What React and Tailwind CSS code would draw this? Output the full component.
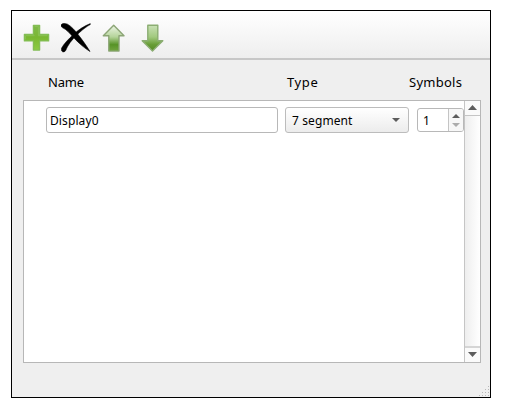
import React from "react";

function PlusIcon() {
  return (
    <svg width="28" height="28" viewBox="0 0 28 28" className="block">
      <defs>
        <linearGradient id="plus" x1="0" y1="0" x2="0" y2="1">
          <stop offset="0" stopColor="#7fb84a" />
          <stop offset="0.5" stopColor="#7ab832" />
          <stop offset="1" stopColor="#8dcb45" />
        </linearGradient>
      </defs>
      <path d="M10.4 1.3h6.2v9.2h9v6.4h-9v9.2h-6.2v-9.2h-9v-6.4h9z" fill="url(#plus)" stroke="#83bd55" strokeWidth="1.3" strokeLinejoin="round" />
      <path d="M11.6 2.6h3.8v9.1h9M2.6 15.4v-3.7h9" fill="none" stroke="#91c65c" strokeWidth="0.7" />
    </svg>
  );
}

function CrossIcon() {
  return (
    <svg width="30" height="30" viewBox="0 0 30 30" className="block">
      <path d="M0.2 1.7C1.2 0.3 4 0.2 6.5 1.2C10.5 3.5 13.5 7 16.5 10.8C21 16.5 25 22 29 28.5C24 25.5 18 20.5 12.8 14.8C8.7 10.2 5.5 6.5 1.4 4.6C0 3.8-0.2 2.6 0.2 1.7Z" fill="#000" stroke="#000" strokeWidth="0.6" />
      <path d="M29.3 0.6C23.5 2.8 17.2 6.8 12.6 11.3C7.7 16 2.8 20.7 0.6 25C-0.1 27.5 0.9 29.1 2.8 28.9C5 28.6 5 26.1 6.8 23.2C9.6 18.2 14.2 13.3 18.6 9.4C22.2 6.3 25.8 3.4 29.3 1.6Z" fill="#000" stroke="#000" strokeWidth="0.5" />
    </svg>
  );
}

function ArrowIcon({ down }) {
  return (
    <svg width="24" height="28" viewBox="0 0 24 28" className="block">
      <defs>
        <linearGradient id={down ? "down" : "up"} x1="0" y1="0" x2="0" y2="1">
          <stop offset="0" stopColor={down ? "#c8e0b5" : "#edf5e6"} />
          <stop offset="0.45" stopColor={down ? "#a2ca7f" : "#b5d49a"} />
          <stop offset="0.75" stopColor={down ? "#689d36" : "#579327"} />
          <stop offset="1" stopColor={down ? "#568b25" : "#72a540"} />
        </linearGradient>
      </defs>
      <path
        d={down ? "M6.8 1.3h10v15.4h5L11.5 27L1.2 16.7h5.6z" : "M11.7 1.2L22 11.8h-5v15.3H6.8V11.8H1.3z"}
        fill={down ? "url(#down)" : "url(#up)"}
        stroke={down ? "#8bad72" : "#8ca576"}
        strokeWidth="1.4"
        strokeLinejoin="round"
      />
    </svg>
  );
}

function Triangle({ up, small, faded }) {
  return (
    <svg width={small ? 8 : 9} height={small ? 4 : 5} viewBox="0 0 9 5" preserveAspectRatio="none" className="block">
      <path d={up ? "M4.5 0L9 5H0z" : "M0 0h9L4.5 5z"} fill={faded ? "#acacac" : "#5c5c5c"} />
    </svg>
  );
}

const gripRows = [1, 2, 3, 4];

export default function App() {
  return (
    <div className="h-[416px] w-[521px] overflow-hidden bg-white pl-[11px] pt-[10px] text-black">
      <div className="flex h-[388px] w-[480px] flex-col border border-black bg-[#efefef] font-['Noto_Sans',sans-serif]">
        <div className="flex h-[49px] shrink-0 border-b-2 border-[#c7c7c7] bg-linear-to-b from-white to-[#eeeeee]">
          <div className="ml-[11px] mt-[13px] w-[38px]"><PlusIcon /></div>
          <div className="mt-[12px] w-[41px]"><CrossIcon /></div>
          <div className="mt-[13px] w-[39px]"><ArrowIcon /></div>
          <div className="mt-[13px]"><ArrowIcon down /></div>
        </div>
        <div className="flex h-[40px] shrink-0 pl-[35px] pt-[14px] text-[13px] leading-4">
          <div className="w-[239px] pl-px tracking-[-0.2px]">Name</div>
          <div className="w-[122px] pl-px tracking-[0.6px]">Type</div>
          <div className="pl-px tracking-[0.25px]">Symbols</div>
        </div>
        <div className="ml-[11px] flex h-[263px] w-[458px] border border-[#b7b7b7] bg-white">
          <div className="flex w-[440px] pl-[22px] pt-[6px] text-[12px] leading-[26px]">
            <div className="mr-[7px] h-[26px] w-[232px] shrink-0 rounded-[3px] border border-[#b8b8b8] pl-[3px] tracking-[0.1px]">Display0</div>
            <div className="mr-[8px] flex h-[26px] w-[124px] shrink-0 items-start justify-between rounded-[3px] border border-[#bcbcbc] bg-linear-to-b from-white to-[#ececec] pl-[6px] pr-[8px]">
              <span className="tracking-[0.1px]">7 segment</span>
              <span className="mt-[10px]"><Triangle small /></span>
            </div>
            <div className="mt-px flex h-[24px] w-[47px] shrink-0 rounded-[3px] border border-[#b8b8b8] bg-white">
              <div className="w-[31px] border-r border-[#c4c4c4] pl-[5px] leading-[24px]">1</div>
              <div className="flex flex-1 flex-col items-center justify-center gap-[5px] rounded-r-[2px] bg-[#f7f7f7]">
                <Triangle up small />
                <Triangle small faded />
              </div>
            </div>
          </div>
          <div className="flex flex-1 flex-col border-l border-[#c5c5c5] bg-linear-to-r from-[#eeeeee] to-white">
            <div className="flex h-[15px] items-start justify-center border-b border-[#c5c5c5] bg-[#fafafa] pt-[4px]"><Triangle up /></div>
            <div className="flex-1" />
            <div className="flex h-[16px] items-start justify-center border-t-2 border-[#d5d5d5] bg-[#fafafa] pt-[4px]"><Triangle /></div>
          </div>
        </div>
        <div className="flex flex-1 items-end justify-end pb-px pr-px">
          <div className="flex flex-col items-end gap-[2px]">
            {gripRows.map((n) => (
              <div key={n} className="flex gap-[2px]">
                {Array.from({ length: n }, (_, i) => <i key={i} className="size-[1px] bg-[#b8b8b8]" />)}
              </div>
            ))}
          </div>
        </div>
      </div>
    </div>
  );
}
